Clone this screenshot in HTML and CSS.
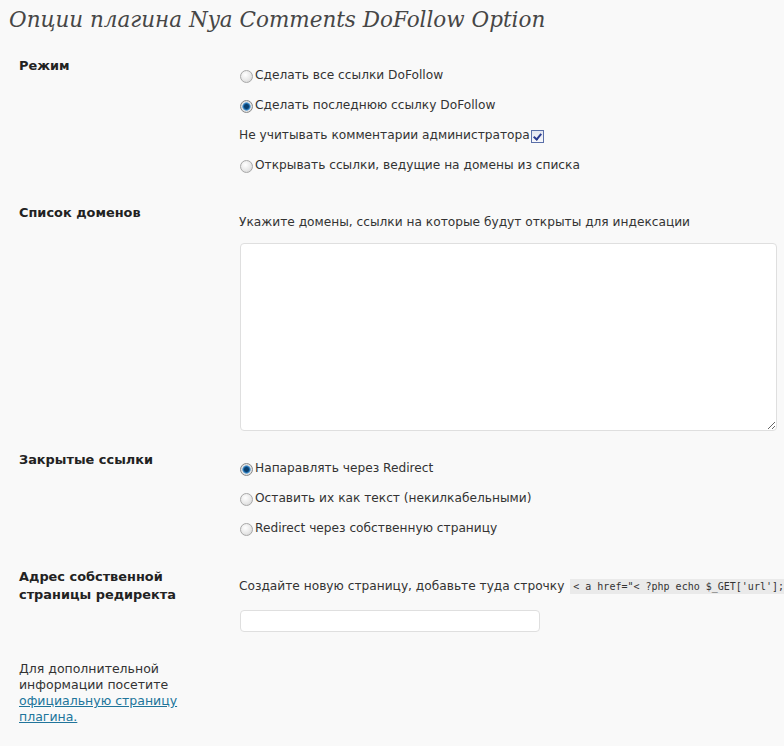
FILE: index.html
```html
<!DOCTYPE html>
<html lang="ru">
<head>
<meta charset="utf-8">
<title>Nya Comments DoFollow Option</title>
<link rel="stylesheet" href="styles.css">
</head>
<body>
<div class="wrap">
  <h2 class="title">Опции плагина Nya Comments DoFollow Option</h2>

  <div class="row row-mode">
    <div class="label">Режим</div>
    <div class="controls lines">
      <label class="line"><span class="radio"></span>Сделать все ссылки DoFollow</label>
      <label class="line"><span class="radio checked"></span>Сделать последнюю ссылку DoFollow</label>
      <label class="line">Не учитывать комментарии администратора<span class="checkbox"></span></label>
      <label class="line"><span class="radio"></span>Открывать ссылки, ведущие на домены из списка</label>
    </div>
  </div>

  <div class="row row-domains">
    <div class="label">Список доменов</div>
    <div class="controls text-controls">
      <div class="hint">Укажите домены, ссылки на которые будут открыты для индексации</div>
      <textarea class="domains"></textarea>
    </div>
  </div>

  <div class="row row-closed">
    <div class="label">Закрытые ссылки</div>
    <div class="controls lines">
      <label class="line"><span class="radio checked"></span>Напаравлять через Redirect</label>
      <label class="line"><span class="radio"></span>Оставить их как текст (некилкабельными)</label>
      <label class="line"><span class="radio"></span>Redirect через собственную страницу</label>
    </div>
  </div>

  <div class="row row-address">
    <div class="label">Адрес собственной<br>страницы редиректа</div>
    <div class="controls text-controls">
      <div class="hint nowrap">Создайте новую страницу, добавьте туда строчку <code>&lt; a href="&lt; ?php echo $_GET['url'];</code></div>
      <input class="address" type="text">
    </div>
  </div>

  <p class="footer">Для дополнительной<br>информации посетите<br><a href="#">официальную страницу<br>плагина.</a></p>
</div>
</body>
</html>
```

FILE: styles.css
```css
html, body {
  margin: 0;
  padding: 0;
  background: #f9f9f9;
  overflow: hidden;
}

.wrap {
  width: 784px;
  height: 746px;
  overflow: hidden;
  font-family: "DejaVu Sans", Verdana, sans-serif;
  font-size: 12.2px;
  color: #333;
}

.title {
  margin: 0;
  padding: 5px 0 0 9px;
  font-family: "DejaVu Serif", Georgia, serif;
  font-style: italic;
  font-weight: normal;
  font-size: 21.5px;
  line-height: 30px;
  color: #464646;
  white-space: nowrap;
}

.row {
  display: grid;
  grid-template-columns: 239px 1fr;
}

.label {
  padding-left: 19px;
  font-weight: bold;
  line-height: 18px;
  color: #222;
  font-size: 12.9px;
}

.row-mode { margin-top: 22px; }
.row-domains { margin-top: 24px; }
.row-closed { margin-top: 20px; }
.row-address { margin-top: 25px; }

.row-mode .lines { padding-top: 3px; }
.row-closed .lines { padding-top: 2px; }

.controls {
  min-width: 0;
}

.lines {
  display: flex;
  flex-direction: column;
}

.line {
  display: flex;
  align-items: center;
  height: 30px;
  white-space: nowrap;
}

.radio {
  width: 11px;
  height: 11px;
  margin: 2px 2px 0 1px;
  border-radius: 50%;
  border: 1px solid #a8a8a8;
  background: radial-gradient(circle at 40% 35%, #ffffff 0%, #e8e8e8 55%, #cfcfcf 100%);
  box-sizing: content-box;
  flex: none;
}

.radio.checked {
  border-color: #8a8a8a;
  background: radial-gradient(circle at 50% 50%, #0a3f6e 0 2px, #1f6fb0 3px, #7fb1d9 4px, #e6e6e6 4.5px, #d0d0d0 100%);
}

.checkbox {
  position: relative;
  width: 11px;
  height: 11px;
  margin: 2px 0 0 1px;
  border: 1px solid #5a6fa8;
  background: linear-gradient(#e3e6f0, #f7f8fb);
  flex: none;
}

.checkbox::after {
  content: "";
  position: absolute;
  left: 3px;
  top: 1px;
  width: 3px;
  height: 6px;
  border: solid #2a3b8f;
  border-width: 0 2px 2px 0;
  transform: rotate(40deg);
}

.text-controls {
  padding-top: 9px;
}

.hint {
  line-height: 18px;
  white-space: nowrap;
}

.hint code {
  font-family: "DejaVu Sans Mono", Consolas, monospace;
  font-size: 10px;
  background: #eaeaea;
  padding: 2px 3px;
  margin-left: 2px;
}

.domains {
  display: block;
  box-sizing: border-box;
  margin: 12px 0 0 1px;
  width: 537px;
  height: 188px;
  border: 1px solid #dfdfdf;
  border-radius: 4px;
  background: #fff;
  padding: 3px;
  resize: both;
}

.address {
  display: block;
  box-sizing: border-box;
  margin: 14px 0 0 1px;
  width: 300px;
  height: 22px;
  border: 1px solid #dfdfdf;
  border-radius: 4px;
  background: #fff;
  padding: 2px 4px;
}

.footer {
  margin: 29px 0 0;
  padding-left: 19px;
  line-height: 16px;
  font-size: 12.5px;
  color: #333;
}

.footer a {
  color: #21759b;
  text-decoration: underline;
}
```
